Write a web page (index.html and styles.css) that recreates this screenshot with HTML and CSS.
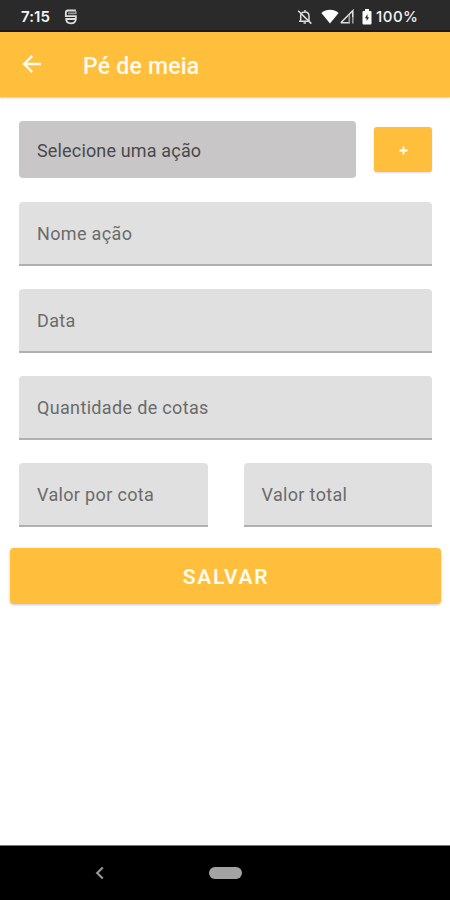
FILE: index.html
```html
<!DOCTYPE html>
<html lang="pt-BR">
<head>
<meta charset="utf-8">
<meta name="viewport" content="width=device-width, initial-scale=1">
<title>Pé de meia</title>
<link rel="stylesheet" href="styles.css">
</head>
<body>
<div class="screen">
  <div class="status">
    <span class="clock">7:15</span>
    <svg class="notice" width="14" height="16" viewBox="0 0 14 16" fill="none" stroke="#dedede" stroke-width="1.8"><path d="M11.8 1.5H4C2.4 1.5 1.8 2.5 1.8 4V7.2H11.8V10C11.8 12.8 9.8 14.3 7 14.3S2.2 12.8 2.2 10H11.8"/><path d="M4 4.4H11.8V2" stroke-width="1.6" stroke="#999"/></svg>
    <svg class="bell" width="16" height="16" viewBox="0 0 16 16" fill="none" stroke="#dcdcdc" stroke-width="1.5"><path d="M3.7 12.2V7.2C3.7 4.8 5.4 3 8 3S12 4.8 12 7.3V12M2 12.2H12M8 1V3"/><path d="M1.2 1.8L14.3 14.6" stroke-width="1.6"/><path d="M6.5 14H9"/></svg>
    <svg class="wifi" width="18" height="15" viewBox="0 0 18 15"><path d="M.4 4C5.3-.3 12.7-.3 17.6 4L9 14.5Z" fill="#fff"/></svg>
    <svg class="signal" width="16" height="15" viewBox="0 0 16 15" fill="none"><path d="M1.8 13.7L13.8 1.7V8M1.8 13.7H11" stroke="#ddd" stroke-width="1.6"/><path d="M10.3 6V13.7M13.8 8V14.5" stroke="#999" stroke-width="1.7"/></svg>
    <svg class="battery" width="10" height="16" viewBox="0 0 10 16"><path d="M3 0H7V2H8.5Q9.5 2 9.5 3V14.5Q9.5 15.5 8.5 15.5H1.5Q.5 15.5 .5 14.5V3Q.5 2 1.5 2H3Z" fill="#fff"/><path d="M5.5 5L2.9 9.3H4.6V12L7.1 8.2H5.5Z" fill="#2a2a2a"/></svg>
    <span class="percent">100%</span>
  </div>
  <header class="appbar">
    <svg width="20" height="20" viewBox="0 0 20 20" fill="none" stroke="#fffbee" stroke-width="2.4"><path d="M19 10H2.5M10.3 1.8L2.1 10L10.3 18.2"/></svg>
    <h1>Pé de meia</h1>
  </header>
  <main class="form">
    <div class="row top">
      <div class="select"><span class="t-select">Selecione uma ação</span></div>
      <button class="add" aria-label="Adicionar"><svg width="9" height="9" viewBox="0 0 9 9"><path d="M4.5 .5V8.5M.5 4.5H8.5" stroke="#fff" stroke-width="1.8"/></svg></button>
    </div>
    <div class="field"><span>Nome ação</span></div>
    <div class="field"><span>Data</span></div>
    <div class="field"><span>Quantidade de cotas</span></div>
    <div class="row pair">
      <div class="field"><span>Valor por cota</span></div>
      <div class="field"><span>Valor total</span></div>
    </div>
    <button class="save"><span>SALVAR</span></button>
  </main>
  <nav class="navbar">
    <svg width="9" height="14" viewBox="0 0 9 14" fill="none" stroke="#969696" stroke-width="2.2"><path d="M7.8 1.5L2.2 7L7.8 12.5"/></svg>
    <span class="home"></span>
  </nav>
</div>
</body>
</html>
```
FILE: styles.css
```css
* { box-sizing: border-box; }
body { margin: 0; background: #fff; font-family: Roboto, sans-serif; }
button { border: 0; padding: 0; font-family: inherit; }
svg { display: block; flex: none; }
.screen { width: 450px; height: 900px; display: flex; flex-direction: column; background: #fff; overflow: hidden; }
.status { height: 32px; flex: none; display: flex; align-items: center; padding: 1px 0 0 21px; background: #2a2a2a; border-bottom: 2px solid #1c1722; color: #f4f4f4; font-family: Inter, sans-serif; }
.clock { width: 43px; margin-top: 2px; font-size: 15px; font-weight: 600; line-height: 20px; letter-spacing: .1px; white-space: nowrap; }
.percent { margin: 2px 0 0 4px; font-size: 15px; font-weight: 500; line-height: 20px; letter-spacing: .5px; }
.notice { margin-top: 2px; }
.bell { margin: 2px 0 0 219px; }
.wifi { margin: 1px 0 0 8px; }
.signal { margin: 2px 0 0 0; }
.battery { margin: 2px 0 0 7px; }
.appbar { height: 64.5px; flex: none; display: flex; align-items: center; padding-left: 22px; background: #ffbf3c; box-shadow: 0 1px 2px rgba(0,0,0,.22); }
.appbar h1 { margin: 5px 0 0 41px; color: #fffbee; font-size: 23px; font-weight: 500; line-height: 28px; letter-spacing: .22px; }
.appbar svg { margin-top: 0; }
.form { flex: 1; padding: 24.5px 18px 0 19px; display: flex; flex-direction: column; }
.row { display: flex; }
.top { justify-content: space-between; align-items: center; margin-bottom: 24px; }
.select { width: 337px; height: 57px; display: flex; align-items: center; padding: 2px 0 0 18px; border-radius: 4px; background: #c9c6c7; color: #4a494a; font-size: 18px; }
.add { width: 58px; height: 44.5px; display: flex; align-items: center; justify-content: center; border-radius: 3px; padding-top: 1px; background: #ffbf3c; box-shadow: 0 1px 2px rgba(0,0,0,.15); }
.field { height: 63.5px; flex: none; display: flex; align-items: center; margin-bottom: 23.5px; padding: 1px 0 0 18px; border-radius: 4px 4px 0 0; background: #e0e0e0; border-bottom: 2px solid #b0b0b0; color: #6b6b6b; font-size: 18px; letter-spacing: .34px; }
.field span, .select span { white-space: nowrap; }
.t-select { letter-spacing: .16px; }
.pair { justify-content: space-between; }
.pair .field { width: 188.5px; margin-bottom: 21.5px; }
.save { height: 56px; flex: none; margin: 0 -9px; padding: 1px 0 0 1px; border-radius: 4px; background: #ffbf3c; color: #fffbee; font-size: 21px; font-weight: 600; letter-spacing: 1.7px; box-shadow: 0 1px 3px rgba(0,0,0,.22); }
.navbar { height: 55px; flex: none; display: flex; align-items: center; padding-left: 95px; background: #000; border-top: 1px solid #777; }
.home { width: 33px; height: 12.5px; margin-left: 105px; border-radius: 7px; background: #a3a3a3; }
```
